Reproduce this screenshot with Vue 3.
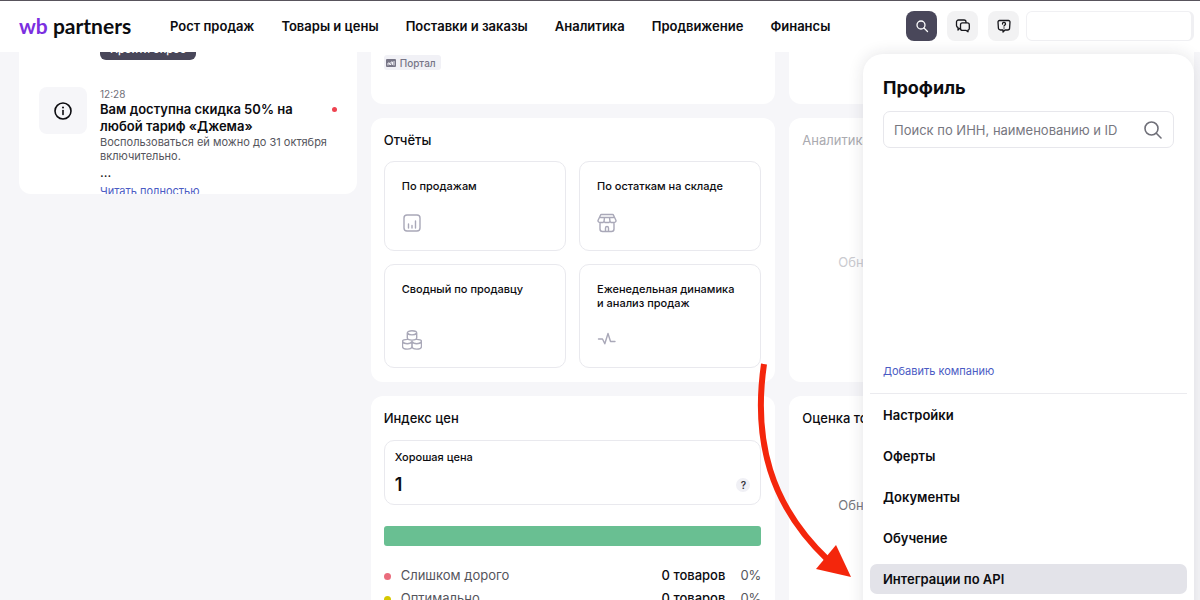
<script setup>
const nav = ['Рост продаж', 'Товары и цены', 'Поставки и заказы', 'Аналитика', 'Продвижение', 'Финансы']
const menu = ['Настройки', 'Оферты', 'Документы', 'Обучение', 'Интеграции по API']
const active = 'Интеграции по API'
const levels = [
  { name: 'Слишком дорого', tone: 'pink' },
  { name: 'Оптимально', tone: 'yellow' },
]
</script>

<template>
  <div class="page">
    <header class="header">
      <a href="#" class="logo"><span class="wb">wb</span> partners</a>
      <nav class="nav">
        <a v-for="n in nav" :key="n" href="#">{{ n }}</a>
      </nav>
      <div class="tools">
        <button class="tool dark" aria-label="Поиск">
          <svg width="14" height="14" viewBox="0 0 14 14"><circle cx="6" cy="6" r="4" /><path d="M9 9l3.5 3.5" /></svg>
        </button>
        <button class="tool" aria-label="Чаты">
          <svg width="16" height="16" viewBox="0 0 16 16"><path d="M5.500 10.500H4.500L3 12V9.500A2 2 0 0 1 1.500 7.600V4a2 2 0 0 1 2-2H9a2 2 0 0 1 2 2v.5" /><path d="M7.500 4.800h4.800a2 2 0 0 1 2 2v3.600a2 2 0 0 1-1.300 1.800v1.600L11.200 12.400H7.500a2 2 0 0 1-2-2V6.800a2 2 0 0 1 2-2z" /></svg>
        </button>
        <button class="tool" aria-label="Помощь">
          <svg width="16" height="16" viewBox="0 0 16 16"><path d="M3.500 2.500h9a1.500 1.500 0 0 1 1.500 1.500l-.4 6a2 2 0 0 1-2 2H9L7 14v-2H4.400a2 2 0 0 1-2-2L2 4a1.500 1.500 0 0 1 1.500-1.500z" /><path d="M6.500 6a1.500 1.500 0 1 1 2.300 1.100c-.6.400-.8.500-.8 1M8 9.800v.2" /></svg>
        </button>
        <button class="account" aria-label="Профиль"></button>
      </div>
    </header>

    <main class="board">
      <section class="card news">
        <button class="survey">Пройти опрос</button>
        <article class="item">
          <div class="info">
            <svg width="20" height="20" viewBox="0 0 20 20"><circle cx="10" cy="10" r="8" /><path d="M10 9.500v4" /><circle class="dot-fill" cx="10" cy="6.500" r="1" /></svg>
          </div>
          <div class="text">
            <time>12:28</time>
            <h3>Вам доступна скидка 50% на любой тариф «Джема»</h3>
            <p>Воспользоваться ей можно до 31 октября включительно.</p>
            <p class="more">...</p>
            <a href="#">Читать полностью</a>
          </div>
          <span class="unread"></span>
        </article>
      </section>

      <div class="column">
        <section class="card stub">
          <span class="tag">
            <svg width="10" height="8" viewBox="0 0 10 8"><rect width="10" height="8" rx="1" /><path d="M2 6V4h1.500v1.500H5V3h1.500v2.500M8 2.500V6" /></svg>
            Портал
          </span>
        </section>

        <section class="card reports">
          <h2>Отчёты</h2>
          <div class="tiles">
            <a href="#" class="tile">
              По продажам
              <svg width="20" height="20" viewBox="0 0 20 20"><rect x="2" y="2" width="16" height="16" rx="3" /><path d="M6.500 11v4M10 12.500V15M13.500 8v7" /></svg>
            </a>
            <a href="#" class="tile">
              По остаткам на складе
              <svg width="20" height="20" viewBox="0 0 20 20"><path d="M4.500 1.500h11a1 1 0 0 1 1 .8L19 7.500a1.800 1.800 0 0 1-1.800 2H14l-1-1-1 1H8l-1-1-1 1H2.800A1.800 1.800 0 0 1 1 7.500l2.500-5.200a1 1 0 0 1 1-.8zM3.500 4.500h13M7.500 4.500L7 8.500M12.500 4.500l.5 4M3 9.700V16a2.500 2.500 0 0 0 2.500 2.500h9A2.500 2.500 0 0 0 17 16V9.700M8.500 18.500v-3.500a1.500 1.500 0 0 1 3 0v3.500" /></svg>
            </a>
            <a href="#" class="tile tall">
              Сводный по продавцу
              <svg width="20" height="20" viewBox="0 0 20 20"><path d="M10 .7c2.500 0 4.700.9 4.700 2.200v5.200c0 1.200-2.200 2-4.700 2s-4.700-.8-4.700-2V2.900C5.300 1.600 7.500.7 10 .7zM5.500 3.200c1 1.300 2.500 1.700 4.500 1.700s3.500-.4 4.500-1.700M5.200 9.400C2.500 9.400.5 10.300.5 11.600v4.600c0 1.700 2 2.900 4.700 2.900s4.700-1.200 4.700-2.900v-4.600M.8 12c.9 1.300 2.400 1.700 4.400 1.700s3.900-.6 4.700-2.100M14.800 9.400c2.700 0 4.700.9 4.700 2.200v4.600c0 1.700-2 2.900-4.700 2.900s-4.700-1.200-4.700-2.900v-4.600M19.200 12c-.9 1.300-2.400 1.700-4.400 1.700s-3.900-.6-4.700-2.100" /></svg>
            </a>
            <a href="#" class="tile tall">
              Еженедельная динамика<br />и анализ продаж
              <svg width="20" height="20" viewBox="0 0 20 20"><path d="M1.500 9h4l2.300 4.800L11 3.500l2.500 8h4.500" /></svg>
            </a>
          </div>
        </section>

        <section class="card index">
          <h2>Индекс цен</h2>
          <div class="price">
            <span>Хорошая цена</span>
            <div class="price-row"><strong>1</strong><button class="hint">?</button></div>
          </div>
          <div class="bar"></div>
          <table>
            <tbody>
              <tr v-for="l in levels" :key="l.name">
                <td><i :class="l.tone"></i>{{ l.name }}</td>
                <td class="count">0 товаров</td>
                <td class="share">0%</td>
              </tr>
            </tbody>
          </table>
        </section>
      </div>

      <div class="column">
        <section class="card stub"></section>
        <section class="card analytics">
          <h2>Аналитика</h2>
          <p>Обновляем данные</p>
        </section>
        <section class="card rating">
          <h2>Оценка товаров</h2>
          <p>Обновляем данные</p>
        </section>
      </div>
    </main>

    <aside class="profile">
      <h1>Профиль</h1>
      <label class="search">
        <input type="text" placeholder="Поиск по ИНН, наименованию и ID" aria-label="Поиск по ИНН, наименованию и ID" />
        <svg width="20" height="20" viewBox="0 0 20 20"><circle cx="8.500" cy="8.500" r="6.500" /><path d="M13.300 13.300L18 18" /></svg>
      </label>
      <div class="companies"></div>
      <a href="#" class="add">Добавить компанию</a>
      <hr />
      <nav class="menu">
        <a v-for="m in menu" :key="m" href="#" :class="{ active: m === active }">{{ m }}</a>
      </nav>
    </aside>

    <svg class="arrow" width="100" height="220" viewBox="0 0 100 220">
      <path class="shaft" d="M14 4C3 80 20 145 78 200" />
      <path class="head" d="M86 185L66 209L101 217Z" />
    </svg>
  </div>
</template>

<style>
body { margin: 0; }
</style>

<style scoped>
* { box-sizing: border-box; }
.page {
  position: relative;
  display: flex;
  flex-direction: column;
  height: 100vh;
  overflow: hidden;
  background: #f6f6f9;
  color: #0c0c10;
  font-family: Inter, "Noto Sans", sans-serif;
  font-size: 13px;
}
a { color: inherit; text-decoration: none; }
h1, h2, h3, p { margin: 0; }
button { padding: 0; border: 0; font-family: inherit; }
svg { fill: none; stroke: currentColor; stroke-linecap: round; stroke-linejoin: round; flex: none; }

.header {
  flex: none;
  display: flex;
  align-items: center;
  height: 52px;
  padding: 0 6px 2px 19px;
  border-top: 1px solid #58545c;
  background: #fff;
}
.logo { width: 151px; font-family: Lato, sans-serif; font-size: 21px; font-weight: 700; line-height: 24px; }
.wb { color: #7b2fe0; }
.nav { display: flex; gap: 27px; font-size: 13px; font-weight: 600; white-space: nowrap; }
.tools { display: flex; gap: 10px; margin-left: auto; }
.tool {
  display: grid;
  place-items: center;
  width: 31px;
  height: 30px;
  border-radius: 8px;
  background: #f2f2f3;
  color: #17171c;
  stroke-width: 1.3;
}
.tool.dark { background: #49475a; color: #fff; }
.account { width: 168px; height: 30px; margin-left: -3px; border: 1px solid #f0f0f3; border-right-width: 3px; border-radius: 6px; background: #fff; }

.board {
  flex: 1;
  min-height: 0;
  overflow: hidden;
  display: grid;
  grid-template-columns: 338fr 405fr 405fr;
  align-items: start;
  gap: 14px;
  padding: 0 6px 0 19px;
}
.card { border-radius: 12px; background: #fff; }
.column { display: flex; flex-direction: column; gap: 14px; min-width: 0; }
h2 { font-size: 13px; font-weight: 500; line-height: 20px; }

.news { height: 142px; overflow: hidden; border-radius: 0 0 12px 12px; padding: 0 20px; }
.survey {
  display: block;
  width: 96px;
  height: 22px;
  margin: -14px 0 27px 61px;
  border-radius: 6px;
  background: #49475a;
  color: #fff;
  font-size: 11px;
  font-weight: 500;
}
.item { display: flex; align-items: flex-start; }
.info { display: grid; place-items: center; width: 48px; height: 47px; border-radius: 8px; background: #f6f6f9; stroke-width: 1.6; }
.dot-fill { fill: currentColor; stroke: none; }
.text { width: 229px; margin-left: 13px; }
.text time { display: block; color: #6f6f78; font-size: 10px; line-height: 14px; }
.text h3 { width: 200px; font-size: 13px; font-weight: 600; line-height: 17px; }
.text p { color: #55555c; font-size: 11px; line-height: 14px; }
.text .more { font-size: 13px; line-height: 18px; color: #17171c; }
.text a { display: block; color: #4a5bc4; font-size: 11px; line-height: 20px; }
.unread { width: 5px; height: 5px; margin: 20px 0 0 auto; border-radius: 50%; background: #ee4350; }

.stub { display: flex; align-items: flex-start; height: 52px; padding: 3px 13px; border-radius: 0 0 12px 12px; }
.tag {
  display: flex;
  align-items: center;
  gap: 4px;
  height: 15px;
  padding: 0 5px 0 2px;
  border-radius: 3px;
  background: #f1f1f6;
  color: #777586;
  font-size: 10px;
  font-weight: 500;
}
.tag rect { fill: #777586; stroke: none; }
.tag path { stroke: #f1f1f6; }

.reports { height: 264px; padding: 12px 14px 14px 13px; }
.tiles { display: grid; grid-template-columns: 1fr 1fr; gap: 13px; margin-top: 11px; }
.tile {
  display: flex;
  flex-direction: column;
  justify-content: space-between;
  height: 90px;
  padding: 17px 17px;
  border: 1px solid #e9e9ee;
  border-radius: 10px;
  font-size: 11px;
  font-weight: 500;
  line-height: 14px;
}
.tile svg { color: #a9a8b8; stroke-width: 1.4; }
.tile.tall { height: 104px; }

.index { padding: 12px 14px 14px 13px; }
.price { margin-top: 12px; padding: 8px 10px 7px; border: 1px solid #e9e9ee; border-radius: 10px; font-size: 11px; font-weight: 500; line-height: 16px; }
.price-row { display: flex; align-items: center; justify-content: space-between; margin-top: 8px; line-height: 24px; }
.price-row strong { font-size: 18px; font-weight: 600; }
.hint { width: 14px; height: 14px; border-radius: 50%; background: #f0f0f5; color: #34343c; font-size: 10px; font-weight: 600; }
.bar { height: 20px; margin: 21px 0 17px; border-radius: 3px; background: #69bf92; }
table { width: 100%; border-collapse: collapse; font-size: 13px; }
td { height: 23px; padding: 0; color: #55555c; }
td i { display: inline-block; width: 7px; height: 7px; margin-right: 10px; border-radius: 50%; }
.pink { background: #ea6c7d; }
.yellow { background: #d6c800; }
td.count { color: #0c0c10; font-weight: 500; text-align: right; }
td.share { width: 36px; text-align: right; }

.analytics { height: 264px; padding: 12px 13px; color: #aaaab0; }
.analytics h2 { font-weight: 400; }
.analytics p { margin-top: 102px; padding-left: 36px; color: #cbcbd0; line-height: 20px; }
.rating { height: 264px; padding: 12px 13px; }
.rating p { margin-top: 67px; padding-left: 36px; color: #77777e; line-height: 20px; }

.profile {
  position: absolute;
  top: 54px;
  right: 6px;
  bottom: -20px;
  display: flex;
  flex-direction: column;
  width: 331px;
  padding: 22px 7px 0;
  border-radius: 20px 20px 0 0;
  background: #fff;
  box-shadow: 0 0 16px rgba(30, 30, 50, 0.12);
}
.profile h1 { margin: 0 13px; font-size: 18px; font-weight: 700; line-height: 24px; }
.search { display: flex; align-items: center; height: 37px; margin: 11px 13px 0; padding: 0 10px; border: 1px solid #e7e7ec; border-radius: 7px; color: #6f6f78; stroke-width: 1.6; }
.search input { flex: 1; min-width: 0; padding: 0; border: 0; outline: 0; background: none; font: inherit; }
.search input::placeholder { color: #77777f; opacity: 1; }
.companies { height: 213px; }
.add { margin: 0 13px; color: #4a5bc4; font-size: 11px; line-height: 20px; }
.profile hr { width: 100%; margin: 12px 0 6px; border: 0; border-top: 1px solid #ebebef; }
.menu { display: flex; flex-direction: column; gap: 11px; font-size: 13px; font-weight: 600; line-height: 30px; }
.menu a { padding: 0 13px; border-radius: 7px; }
.menu .active { background: #e3e3e9; }

.arrow { position: absolute; left: 750px; top: 360px; overflow: visible; }
.shaft { stroke: #f4260c; stroke-width: 6; stroke-linecap: butt; }
.head { fill: #f4260c; stroke: none; }
</style>
